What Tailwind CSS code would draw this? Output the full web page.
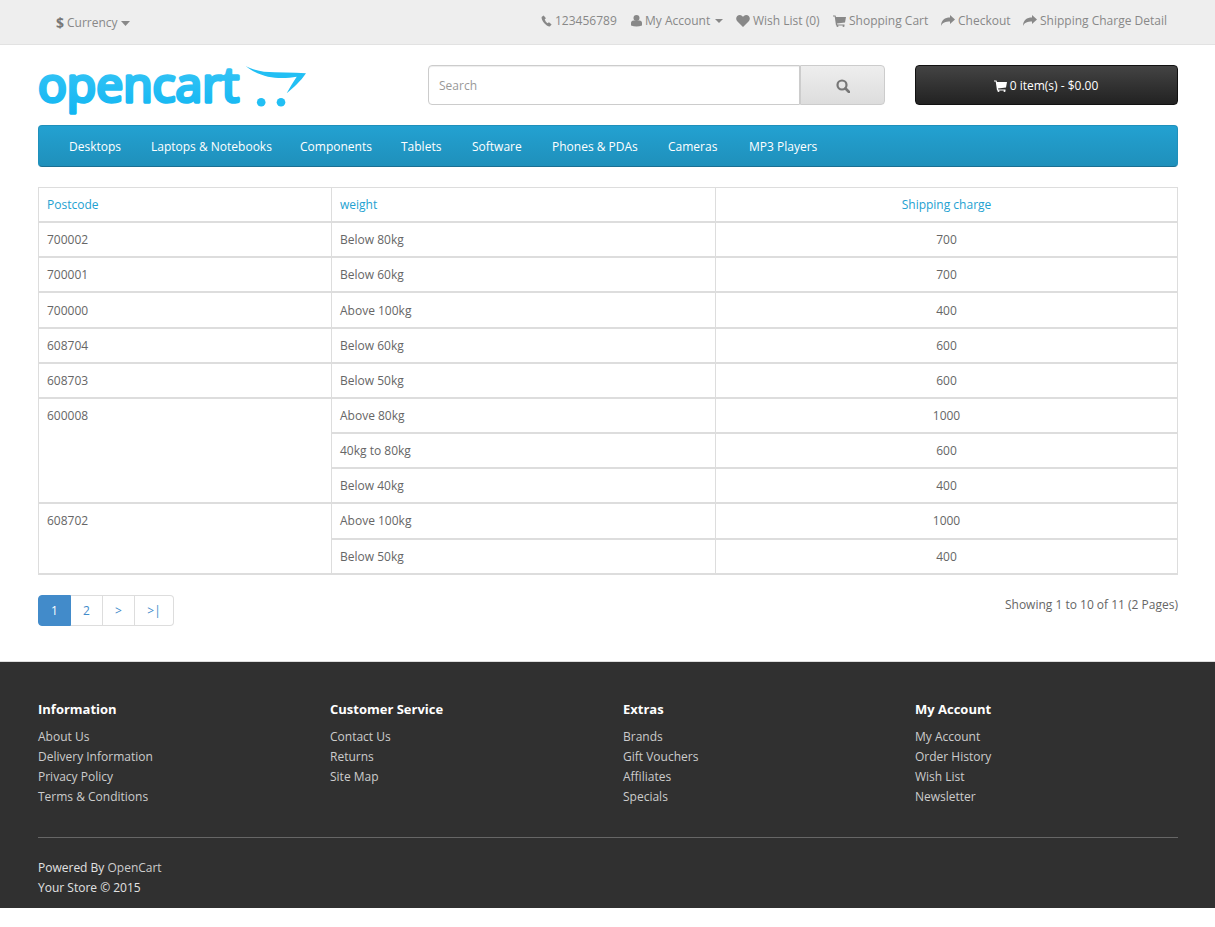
<!DOCTYPE html>
<html><head><meta charset="utf-8"><script src="https://cdn.jsdelivr.net/npm/@tailwindcss/browser@4"></script></head>
<body class="bg-white font-['Open_Sans',sans-serif] text-[12px] leading-[20px] text-[#666]">
<nav class="h-[45px] bg-[#eee] border-b border-[#e2e2e2] pl-[56px] pr-[47px] flex justify-between text-[#888]">
  <div class="pt-[13px] flex items-start gap-[3px]">
    <span class="font-bold text-[14px] text-[#777]">$</span><span>Currency</span>
    <svg class="w-[9px] h-[5px] mt-[8px]" viewBox="0 0 9 5"><path d="M0 0h9L4.500 5z" fill="#888"/></svg>
  </div>
  <div class="flex pt-[10px] h-[31px] items-center">
    <span class="flex items-center w-[90px]"><span class="w-[14px] flex"><svg class="w-[11px] h-[12px]" viewBox="0 0 11 12"><path d="M2.600.6 .6 2C.2 5.500 5 11.300 8.800 11.500L10.600 9.500 8 7.200 6.400 8.200C5 7.200 4.200 5.800 3.700 4.300L5 3.200z" fill="#888"/></svg></span>123456789</span>
    <span class="flex items-center w-[105px]"><span class="w-[14px] flex"><svg class="w-[11px] h-[12px]" viewBox="0 0 11 12"><circle cx="5.500" cy="3" r="3" fill="#888"/><path d="M0 10.500V8c0-1.500 1-2.500 2.500-2.500h6C10 5.500 11 6.500 11 8v2.500q-5.500 2-11 0z" fill="#888"/></svg></span>My Account<svg class="w-[8px] h-[4px] ml-[5px]" viewBox="0 0 8 4"><path d="M0 0h8L4 4z" fill="#888"/></svg></span>
    <span class="flex items-center w-[97px]"><span class="w-[17px] flex"><svg class="w-[14px] h-[12px]" viewBox="0 0 14 12"><path d="M7 12 1 6C-1 3 1 0 3.800 0 5.500 0 6.500 1 7 2 7.500 1 8.500 0 10.200 0 13 0 15 3 13 6z" fill="#888"/></svg></span>Wish List (0)</span>
    <span class="flex items-center w-[108px]"><span class="w-[16px] flex"><svg class="w-[13px] h-[12px]" viewBox="0 0 13 12"><path d="M0 .5h2.500L3 2h10l-1 5.500-8 1 .3 1H11.500v1H3L1.700 1.500H0z" fill="#888"/><circle cx="4.500" cy="11" r="1" fill="#888"/><circle cx="10.500" cy="11" r="1" fill="#888"/></svg></span>Shopping Cart</span>
    <span class="flex items-center w-[82px]"><span class="w-[17px] flex"><svg class="w-[14px] h-[12px]" viewBox="0 0 14 12"><path d="M14 4.500 9 0v2.500C4 2.500 0 5 0 11c1.500-3.500 4.500-4.500 9-4.500V9z" fill="#888"/></svg></span>Checkout</span>
    <span class="flex items-center w-[145px]"><span class="w-[17px] flex"><svg class="w-[14px] h-[12px]" viewBox="0 0 14 12"><path d="M14 4.500 9 0v2.500C4 2.500 0 5 0 11c1.500-3.500 4.500-4.500 9-4.500V9z" fill="#888"/></svg></span>Shipping Charge Detail</span>
  </div>
</nav>
<header class="pl-[38px] pr-[37px] flex items-start h-[80px]">
  <div class="w-[390px] pt-[20px]">
    <svg class="overflow-visible" width="270" height="50" viewBox="0 0 270 50">
      <defs><linearGradient id="g" x1="0" y1="0" x2="0" y2="1"><stop offset="0" stop-color="#40c8f6"/><stop offset="1" stop-color="#0fb5f2"/></linearGradient></defs>
      <text x="0" y="37" font-family="Open Sans" font-weight="400" font-size="47" fill="url(#g)" stroke="url(#g)" stroke-width="3.500" stroke-linejoin="round" textLength="201" lengthAdjust="spacingAndGlyphs">opencart</text>
      <path d="M207.700 1C213 4 220 6 226 6.700 240 8 255 7 268 8.300 263 16 255 23 248.700 28.300 252 22 256 16 258.700 11.700 245 14 225 15 207.700 1z" fill="#22bff4"/>
      <circle cx="223.200" cy="37.300" r="4.300" fill="#22bff4"/><circle cx="243" cy="37.300" r="4.300" fill="#22bff4"/>
    </svg>
  </div>
  <div class="w-[457px] mt-[20px] h-[40px] flex">
    <div class="flex-1 border border-[#ccc] rounded-l-[4px] bg-white pl-[10px] pt-[1px] flex items-center text-[#999] shadow-[inset_0_1px_1px_rgba(0,0,0,0.075)]">Search</div>
    <div class="w-[85px] border border-[#ccc] rounded-r-[4px] bg-gradient-to-b from-[#eee] to-[#ddd] flex items-center justify-center pt-[1px]">
      <svg class="w-[14px] h-[14px]" viewBox="0 0 14 14"><circle cx="6" cy="6" r="4.500" fill="none" stroke="#777" stroke-width="2.200"/><path d="M9.500 9.500 13 13" stroke="#777" stroke-width="2.600" stroke-linecap="round"/></svg>
    </div>
  </div>
  <div class="ml-[30px] w-[263px] mt-[20px] h-[40px] pt-[1px] rounded-[4px] border border-[#111] bg-gradient-to-b from-[#444] to-[#222] text-white flex items-center justify-center gap-[3px]">
    <svg class="w-[13px] h-[12px] -ml-[1px]" viewBox="0 0 13 12"><path d="M0 .5h2.500L3 2h10l-1 5.500-8 1 .3 1H11.500v1H3L1.700 1.500H0z" fill="#fff"/><circle cx="4.500" cy="11" r="1" fill="#fff"/><circle cx="10.500" cy="11" r="1" fill="#fff"/></svg>0 item(s) - $0.00
  </div>
</header>
<div class="ml-[38px] mr-[37px] h-[42px] rounded-[4px] border border-[#1f90bb] border-b-[#1b6f92] bg-gradient-to-b from-[#23a1d1] to-[#1f90bb] text-white flex items-center pt-[1px] [&>span]:pl-[15px]">
  <span class="ml-[15px] w-[82px]">Desktops</span>
  <span class="w-[149px]">Laptops &amp; Notebooks</span>
  <span class="w-[101px]">Components</span>
  <span class="w-[71px]">Tablets</span>
  <span class="w-[80px]">Software</span>
  <span class="w-[116px]">Phones &amp; PDAs</span>
  <span class="w-[81px]">Cameras</span>
  <span class="w-[100px]">MP3 Players</span>
</div>
<main class="pl-[38px] pr-[37px] pt-[20px]">
  <table class="w-full table-fixed border-separate border-spacing-0 border-l border-t border-[#ddd] [&_td]:border-r [&_td]:border-b-2 [&_td]:border-[#ddd] [&_td]:px-[8px] [&_td]:pt-[8px] [&_td]:align-top [&_td]:leading-[17px]">
    <colgroup><col class="w-[293px]"><col class="w-[384px]"><col></colgroup>
    <tbody class="[&_td:last-child]:text-center">
      <tr class="h-[35px] text-[#23a1d1]"><td>Postcode</td><td>weight</td><td>Shipping charge</td></tr>
      <tr class="h-[35px]"><td>700002</td><td>Below 80kg</td><td>700</td></tr>
      <tr class="h-[35px]"><td>700001</td><td>Below 60kg</td><td>700</td></tr>
      <tr class="h-[36px] [&_td]:!pt-[9px]"><td>700000</td><td>Above 100kg</td><td>400</td></tr>
      <tr class="h-[35px]"><td>608704</td><td>Below 60kg</td><td>600</td></tr>
      <tr class="h-[35px]"><td>608703</td><td>Below 50kg</td><td>600</td></tr>
      <tr class="h-[35px]"><td rowspan="3">600008</td><td>Above 80kg</td><td>1000</td></tr>
      <tr class="h-[35px]"><td>40kg to 80kg</td><td>600</td></tr>
      <tr class="h-[35px]"><td>Below 40kg</td><td>400</td></tr>
      <tr class="h-[36px]"><td rowspan="2">608702</td><td>Above 100kg</td><td>1000</td></tr>
      <tr class="h-[35px]"><td>Below 50kg</td><td>400</td></tr>
    </tbody>
  </table>
  <div class="flex justify-between mt-[20px] h-[66px]">
    <div class="flex h-[31px] leading-[29px] text-[#428bca]">
      <span class="w-[33px] text-center bg-[#428bca] text-white rounded-l-[4px] border border-[#428bca]">1</span>
      <span class="w-[32px] text-center border-y border-r border-[#ddd]">2</span>
      <span class="w-[32px] text-center border-y border-r border-[#ddd]">&gt;</span>
      <span class="w-[39px] text-center border-y border-r border-[#ddd] rounded-r-[4px]">&gt;|</span>
    </div>
    <div>Showing 1 to 10 of 11 (2 Pages)</div>
  </div>
</main>
<footer class="h-[247px] bg-[#303030] border-t border-[#ddd] pl-[38px] pr-[37px] pt-[38px] text-[#ccc]">
  <div class="grid grid-cols-[292px_293px_292px_1fr] h-[106px]">
    <div><h5 class="font-bold text-[13px] leading-[18px] text-white mb-[9px]">Information</h5><ul><li>About Us</li><li>Delivery Information</li><li>Privacy Policy</li><li>Terms &amp; Conditions</li></ul></div>
    <div><h5 class="font-bold text-[13px] leading-[18px] text-white mb-[9px]">Customer Service</h5><ul><li>Contact Us</li><li>Returns</li><li>Site Map</li></ul></div>
    <div><h5 class="font-bold text-[13px] leading-[18px] text-white mb-[9px]">Extras</h5><ul><li>Brands</li><li>Gift Vouchers</li><li>Affiliates</li><li>Specials</li></ul></div>
    <div><h5 class="font-bold text-[13px] leading-[18px] text-white mb-[9px]">My Account</h5><ul><li>My Account</li><li>Order History</li><li>Wish List</li><li>Newsletter</li></ul></div>
  </div>
  <hr class="mt-[31px] border-t border-[#666]">
  <p class="mt-[20px] text-[#e2e2e2]">Powered By <span class="text-[#ccc]">OpenCart</span><br>Your Store © 2015</p>
</footer>
</body></html>
